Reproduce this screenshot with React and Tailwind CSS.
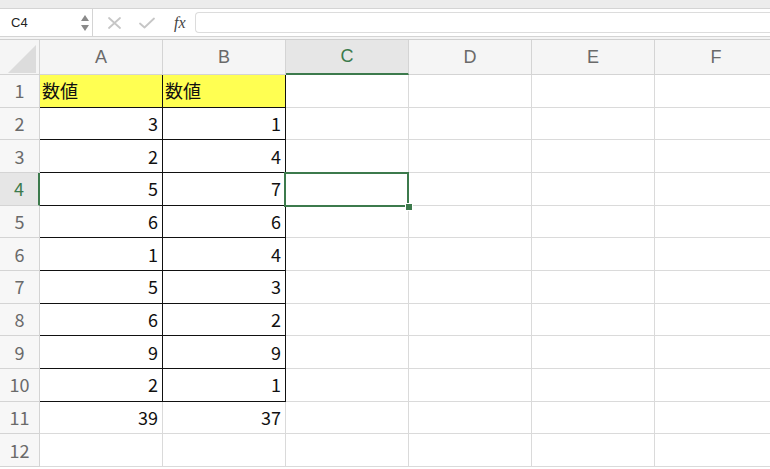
import React from 'react'

const cols = ['A', 'B', 'C', 'D', 'E', 'F']

const data = [
  ['数値', '数値'],
  [3, 1],
  [2, 4],
  [5, 7],
  [6, 6],
  [1, 4],
  [5, 3],
  [6, 2],
  [9, 9],
  [2, 1],
  [39, 37],
  ['', ''],
]

const cjk = { fontFamily: '"Noto Sans CJK JP", "Liberation Sans", sans-serif' }

function FormulaBar() {
  return (
    <div className="h-[29px] flex border-y border-[#d4d4d4] bg-white">
      <div className="w-[93px] flex items-center justify-between border-r border-[#d4d4d4] pl-[11px] pr-[3px]">
        <span className="text-[13px] text-[#222]">C4</span>
        <div className="flex flex-col items-center gap-[4px]">
          <svg width="8" height="6" viewBox="0 0 8 6"><path d="M4 0 L8 6 L0 6 Z" fill="#8a8a8a" /></svg>
          <svg width="8" height="6" viewBox="0 0 8 6"><path d="M0 0 L8 0 L4 6 Z" fill="#8a8a8a" /></svg>
        </div>
      </div>
      <div className="flex items-center pl-[15px] gap-[18px]">
        <svg width="13" height="12" viewBox="0 0 13 12">
          <path d="M1 1 L12 11 M12 1 L1 11" stroke="#c6c6c6" strokeWidth="1.8" strokeLinecap="round" />
        </svg>
        <svg width="16" height="12" viewBox="0 0 16 12">
          <path d="M1 6.5 L5.5 10.5 L15 1.5" stroke="#c6c6c6" strokeWidth="1.8" fill="none" strokeLinecap="round" strokeLinejoin="round" />
        </svg>
        <span className="italic text-[16px] text-[#444] ml-[1px]" style={{ fontFamily: '"Liberation Serif", serif' }}>fx</span>
      </div>
      <div className="flex-1 ml-[9px] my-[3px] border border-[#dcdcdc] border-r-0 rounded-l-[4px] bg-white" />
    </div>
  )
}

function cellBorder(r, c) {
  const boxed = r < 10 && c < 2
  if (boxed) return 'border-r border-b border-r-[#111] border-b-[#111]'
  return 'border-r border-b border-[#dadada]'
}

export default function App() {
  return (
    <div className="w-[770px] h-[469px] overflow-hidden bg-white relative" style={{ fontFamily: '"Liberation Sans", "Noto Sans CJK JP", sans-serif' }}>
      <div className="h-[8px] bg-[#ececec]" />
      <FormulaBar />
      <div className="h-[2px] bg-[#f4f4f4] border-b border-[#cfcfcf] box-content" />

      <div className="grid grid-cols-[40px_repeat(6,123px)]">
        {/* header row */}
        <div className="h-[35px] bg-[#f5f5f5] border-r border-b border-[#d4d4d4] relative">
          <svg className="absolute left-[8px] top-[5px]" width="29" height="28" viewBox="0 0 29 28">
            <path d="M28 0 L28 28 L0 28 Z" fill="#dcdcdc" />
          </svg>
        </div>
        {cols.map((c) =>
          c === 'C' ? (
            <div key={c} className="h-[35px] bg-[#e6e6e6] border-r border-[#d4d4d4] border-b-2 border-b-[#3c7a4c] flex items-center justify-center text-[18px] text-[#3c7a4c]">
              {c}
            </div>
          ) : (
            <div key={c} className="h-[35px] bg-[#f5f5f5] border-r border-b border-[#d4d4d4] flex items-center justify-center text-[18px] text-[#6a6a6a]">
              {c}
            </div>
          )
        )}

        {data.map((row, r) => (
          <React.Fragment key={r}>
            {r === 3 ? (
              <div className="h-[32.67px] bg-[#e6e6e6] border-b border-[#d4d4d4] border-r-2 border-r-[#3c7a4c] flex items-center justify-center text-[18px] text-[#3c7a4c]" style={cjk}>
                {r + 1}
              </div>
            ) : (
              <div className="h-[32.67px] bg-[#f7f7f7] border-r border-b border-[#d4d4d4] flex items-center justify-center text-[18px] text-[#6a6a6a]" style={cjk}>
                {r + 1}
              </div>
            )}
            {cols.map((c, ci) => {
              const v = ci < 2 ? row[ci] : ''
              const isHead = r === 0 && ci < 2
              return (
                <div
                  key={c}
                  className={`h-[32.67px] flex items-center text-[18px] text-[#111] ${cellBorder(r, ci)} ${
                    isHead ? 'bg-[#ffff52] justify-start pl-[2px]' : 'justify-end pr-[4px]'
                  }`}
                  style={cjk}
                >
                  {v}
                </div>
              )
            })}
          </React.Fragment>
        ))}
      </div>

      {/* selection C4 */}
      <div className="absolute left-[284px] top-[172px] w-[125px] h-[35px] border-2 border-[#3c7a4c] pointer-events-none" />
      <div className="absolute left-[405px] top-[203px] w-[6px] h-[6px] bg-[#3c7a4c] border border-white box-content pointer-events-none" />
    </div>
  )
}
